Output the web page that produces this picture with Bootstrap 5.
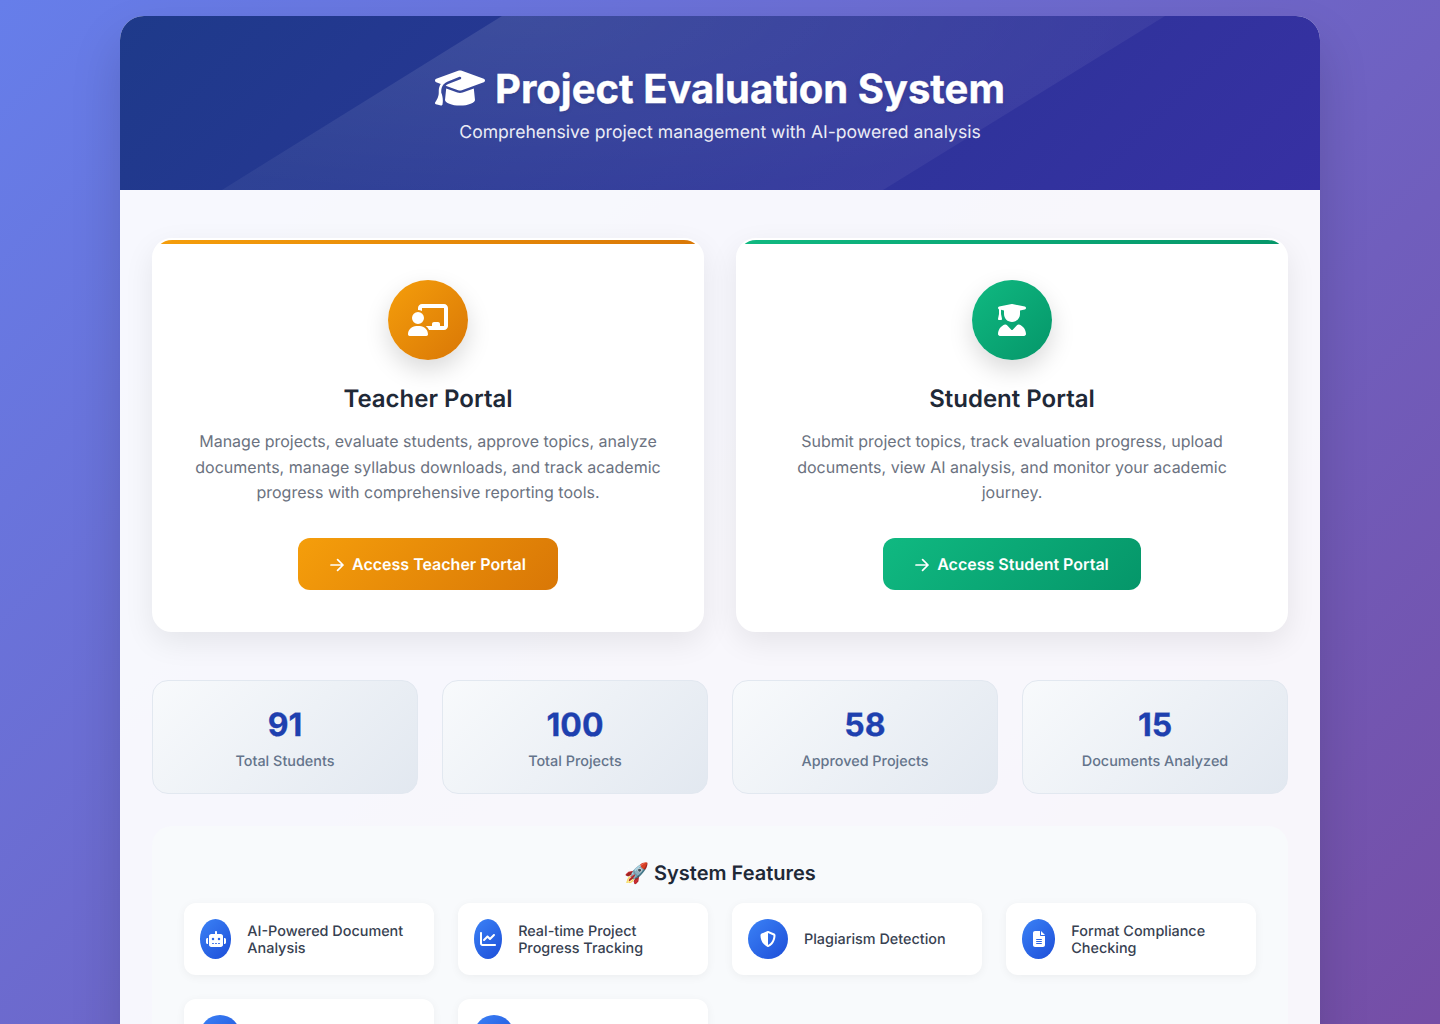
<!DOCTYPE html>
<html lang="en">
<head>
  <meta charset="UTF-8" />
  <title>Project Evaluation System</title>
  <meta name="viewport" content="width=device-width, initial-scale=1" />
  <link href="https://cdn.jsdelivr.net/npm/bootstrap@5.3.0/dist/css/bootstrap.min.css" rel="stylesheet" />
  <style>
    body {
      background: linear-gradient(135deg, #667eea 0%, #764ba2 100%);
      font-family: Inter, "Liberation Sans", sans-serif;
      text-rendering: geometricPrecision;
      padding: 16px 0;
      min-height: 100vh;
    }
    .app-shell {
      width: 1200px;
      background: rgba(255, 255, 255, .95);
      border-radius: 24px;
      box-shadow: 0 25px 50px rgba(0, 0, 0, .15);
      overflow: hidden;
    }
    .app-header {
      position: relative;
      height: 174px;
      padding-top: 49px;
      background: linear-gradient(135deg, #1e3a8a 0%, #3730a3 100%);
      color: #fff;
    }
    .app-header::before {
      content: "";
      position: absolute;
      inset: 0;
      background: radial-gradient(ellipse 650px 180px at 400px 0, rgba(255, 255, 255, .11), rgba(255, 255, 255, .05));
      clip-path: polygon(382px 0, 1045px 0, 763px 100%, 102px 100%);
    }
    .app-title {
      position: relative;
      font-size: 40px;
      font-weight: 700;
      line-height: 48px;
      margin-bottom: 6px;
      text-shadow: 0 2px 4px rgba(0, 0, 0, .1);
      -webkit-text-stroke: .4px #fff;
    }
    .app-title svg { width: 50px; height: 40px; margin-right: 10px; vertical-align: -5px; }
    .app-sub {
      position: relative;
      font-size: 17.6px;
      line-height: 28px;
      margin: 0;
      opacity: .9;
    }
    .app-body { padding: 48px 32px; }
    .portal-row { --bs-gutter-x: 32px; margin-bottom: 48px; }
    .portal-card {
      position: relative;
      height: 394px;
      padding: 40px 32px;
      border: 2px solid #fff;
      border-radius: 20px;
      overflow: hidden;
      box-shadow: 0 10px 30px rgba(0, 0, 0, .08);
    }
    .portal-card::before {
      content: "";
      position: absolute;
      top: 0;
      left: 0;
      right: 0;
      height: 4px;
    }
    .portal-teacher .portal-icon, .portal-teacher .portal-btn {
      background: linear-gradient(135deg, #f59e0b, #d97706);
    }
    .portal-student .portal-icon, .portal-student .portal-btn {
      background: linear-gradient(135deg, #10b981, #059669);
    }
    .portal-teacher::before { background: linear-gradient(90deg, #f59e0b, #d97706); }
    .portal-student::before { background: linear-gradient(90deg, #10b981, #059669); }
    .portal-icon {
      width: 80px;
      height: 80px;
      margin-bottom: 24px;
      box-shadow: 0 10px 25px rgba(0, 0, 0, .15);
    }
    .portal-name {
      font-size: 24px;
      font-weight: 600;
      line-height: 29px;
      color: #1f2937;
      margin-bottom: 16px;
    }
    .portal-text {
      font-size: 16px;
      line-height: 25.6px;
      color: #6b7280;
      margin-bottom: 32px;
    }
    .portal-btn {
      height: 52px;
      padding: 0 32px;
      border: 0;
      border-radius: 12px;
      font-size: 16px;
      font-weight: 600;
      color: #fff;
      line-height: 52px;
    }
    .portal-btn:hover { color: #fff; }
    .portal-btn svg { width: 14px; height: 14px; margin-right: 8px; vertical-align: -2px; }
    .stat-row { --bs-gutter-x: 24px; margin-bottom: 32px; }
    .stat-box {
      height: 114px;
      padding-top: 24px;
      border: 1px solid #e2e8f0;
      border-radius: 16px;
      background: linear-gradient(135deg, #f8fafc, #e2e8f0);
    }
    .stat-num {
      font-size: 32px;
      font-weight: 700;
      line-height: 40px;
      color: #1e40af;
      margin-bottom: 7px;
      -webkit-text-stroke: .3px #1e40af;
    }
    .stat-label {
      font-size: 14.4px;
      font-weight: 500;
      line-height: 20px;
      color: #64748b;
    }
    .feature-panel {
      padding: 32px;
      border-radius: 20px;
      background: #f8fafc;
    }
    .feature-title {
      font-size: 20px;
      font-weight: 600;
      line-height: 30px;
      color: #1f2937;
      margin-bottom: 15px;
    }
    .feature-grid {
      grid-template-columns: repeat(4, 250px);
      gap: 24px;
    }
    .feature-item {
      height: 72px;
      padding: 16px;
      gap: 16px;
      background: #fff;
      border-radius: 12px;
      box-shadow: 0 2px 10px rgba(0, 0, 0, .05);
      font-size: 14.4px;
      font-weight: 500;
      line-height: 17.3px;
      color: #374151;
    }
    .feature-item span { padding-top: 2px; }
    .feature-icon {
      width: 40px;
      height: 40px;
      background: linear-gradient(135deg, #3b82f6, #1d4ed8);
    }
    .feature-icon svg { height: 16px; }
  </style>
</head>
<body>

<div class="app-shell mx-auto">
  <!-- HEADER -->
  <header class="app-header text-center">
    <h1 class="app-title">
      <svg viewBox="0 0 640 512" fill="currentColor"><path d="M320 32c-8.1 0-16.1 1.4-23.7 4.1L15.8 137.4C6.3 140.9 0 149.9 0 160s6.3 19.1 15.8 22.6l57.9 20.9C57.3 229.3 48 259.8 48 291.9v28.1c0 28.4-10.8 57.7-22.3 80.8c-6.5 13-13.9 25.8-22.5 37.6C0 442.7-.9 448.3 .9 453.4s6 8.9 11.2 10.2l64 16c4.2 1.1 8.7 .3 12.4-2s6.3-6.1 7.1-10.4c8.6-42.8 4.3-81.2-2.1-108.7C90.3 344.3 86 329.8 80 316.5V291.9c0-30.2 10.2-58.7 27.9-81.5c12.9-15.5 29.6-28 49.2-35.7l157-61.7c8.2-3.2 17.5 .8 20.7 9s-.8 17.5-9 20.7l-157 61.7c-12.4 4.9-23.3 12.4-32.2 21.6l159.6 57.6c7.6 2.7 15.6 4.1 23.7 4.1s16.1-1.4 23.7-4.1L624.2 182.6c9.5-3.4 15.8-12.5 15.8-22.6s-6.3-19.1-15.8-22.6L343.7 36.1C336.1 33.4 328.1 32 320 32zM128 408c0 35.3 86 72 192 72s192-36.7 192-72L496.7 262.6 354.5 314c-11.1 4-22.8 6-34.5 6s-23.5-2-34.5-6L143.3 262.6 128 408z"/></svg>Project Evaluation System
    </h1>
    <p class="app-sub">Comprehensive project management with AI-powered analysis</p>
  </header>

  <main class="app-body">
    <!-- PORTALS -->
    <div class="row portal-row">
      <div class="col-6">
        <div class="card portal-card portal-teacher text-center align-items-center">
          <div class="portal-icon rounded-circle d-flex align-items-center justify-content-center text-white">
            <svg width="40" height="32" viewBox="0 0 640 512" fill="currentColor"><path d="M160 64c0-35.3 28.7-64 64-64H576c35.3 0 64 28.7 64 64V352c0 35.3-28.7 64-64 64H336.8c-11.8-25.5-29.9-47.5-52.4-64H384V320c0-17.7 14.3-32 32-32h64c17.7 0 32 14.3 32 32v32h64V64L224 64v49.1C205.2 102.2 183.3 96 160 96V64zm0 64a96 96 0 1 1 0 192 96 96 0 1 1 0-192zM133.3 352h53.3C260.3 352 320 411.7 320 485.3c0 14.7-11.9 26.7-26.7 26.7H26.7C11.9 512 0 500.1 0 485.3C0 411.7 59.7 352 133.3 352z"/></svg>
          </div>
          <h2 class="portal-name">Teacher Portal</h2>
          <p class="portal-text">Manage projects, evaluate students, approve topics, analyze documents, manage syllabus downloads, and track academic progress with comprehensive reporting tools.</p>
          <a href="#" class="btn portal-btn"><svg viewBox="0 0 14 14" fill="none" stroke="currentColor" stroke-width="1.7" stroke-linecap="round" stroke-linejoin="round"><path d="M1 7h12M7.6 1.6L13 7l-5.4 5.4"/></svg>Access Teacher Portal</a>
        </div>
      </div>
      <div class="col-6">
        <div class="card portal-card portal-student text-center align-items-center">
          <div class="portal-icon rounded-circle d-flex align-items-center justify-content-center text-white">
            <svg width="28" height="32" viewBox="0 0 448 512" fill="currentColor"><path d="M219.3 .5c3.1-.6 6.3-.6 9.4 0l200 40C439.9 42.7 448 52.6 448 64s-8.1 21.3-19.3 23.5L352 102.9V160c0 70.7-57.3 128-128 128s-128-57.3-128-128V102.9L48 93.3v65.1l15.7 78.4c.9 4.7-.3 9.6-3.3 13.3s-7.6 5.9-12.4 5.9H16c-4.8 0-9.3-2.1-12.4-5.9s-4.3-8.6-3.3-13.3L16 158.4V86.6C6.5 83.3 0 74.3 0 64C0 52.6 8.1 42.7 19.3 40.5l200-40zM111.9 327.7c10.5-3.4 21.8 .4 29.4 8.5l71 75.5c6.3 6.7 17 6.7 23.3 0l71-75.5c7.6-8.1 18.9-11.9 29.4-8.5C401 348.6 448 409.4 448 481.3c0 17-13.8 30.7-30.7 30.7H30.7C13.8 512 0 498.2 0 481.3c0-71.9 47-132.7 111.9-153.6z"/></svg>
          </div>
          <h2 class="portal-name">Student Portal</h2>
          <p class="portal-text">Submit project topics, track evaluation progress, upload documents, view AI analysis, and monitor your academic journey.</p>
          <a href="#" class="btn portal-btn"><svg viewBox="0 0 14 14" fill="none" stroke="currentColor" stroke-width="1.7" stroke-linecap="round" stroke-linejoin="round"><path d="M1 7h12M7.6 1.6L13 7l-5.4 5.4"/></svg>Access Student Portal</a>
        </div>
      </div>
    </div>

    <!-- STATS -->
    <div class="row stat-row text-center">
      <div class="col-3"><div class="stat-box"><div class="stat-num">91</div><div class="stat-label">Total Students</div></div></div>
      <div class="col-3"><div class="stat-box"><div class="stat-num">100</div><div class="stat-label">Total Projects</div></div></div>
      <div class="col-3"><div class="stat-box"><div class="stat-num">58</div><div class="stat-label">Approved Projects</div></div></div>
      <div class="col-3"><div class="stat-box"><div class="stat-num">15</div><div class="stat-label">Documents Analyzed</div></div></div>
    </div>

    <!-- FEATURES -->
    <section class="feature-panel">
      <h3 class="feature-title text-center">🚀 System Features</h3>
      <div class="feature-grid d-grid">
        <div class="feature-item d-flex align-items-center">
          <div class="feature-icon rounded-circle d-flex align-items-center justify-content-center text-white">
            <svg width="20" viewBox="0 0 640 512" fill="currentColor"><path d="M320 0c17.7 0 32 14.3 32 32V96H472c39.8 0 72 32.2 72 72V440c0 39.8-32.2 72-72 72H168c-39.8 0-72-32.2-72-72V168c0-39.8 32.2-72 72-72H288V32c0-17.7 14.3-32 32-32zM208 384c-8.8 0-16 7.2-16 16s7.2 16 16 16h32c8.8 0 16-7.2 16-16s-7.2-16-16-16H208zm96 0c-8.8 0-16 7.2-16 16s7.2 16 16 16h32c8.8 0 16-7.2 16-16s-7.2-16-16-16H304zm96 0c-8.8 0-16 7.2-16 16s7.2 16 16 16h32c8.8 0 16-7.2 16-16s-7.2-16-16-16H400zM264 256a40 40 0 1 0 -80 0 40 40 0 1 0 80 0zm152 40a40 40 0 1 0 0-80 40 40 0 1 0 0 80zM48 224H64V416H48c-26.5 0-48-21.5-48-48V272c0-26.5 21.5-48 48-48zm544 0c26.5 0 48 21.5 48 48v96c0 26.5-21.5 48-48 48H576V224h16z"/></svg>
          </div>
          <span>AI-Powered Document Analysis</span>
        </div>
        <div class="feature-item d-flex align-items-center">
          <div class="feature-icon rounded-circle d-flex align-items-center justify-content-center text-white">
            <svg width="16" viewBox="0 0 512 512" fill="currentColor"><path d="M64 64c0-17.7-14.3-32-32-32S0 46.3 0 64V400c0 44.2 35.8 80 80 80H480c17.7 0 32-14.3 32-32s-14.3-32-32-32H80c-8.8 0-16-7.2-16-16V64zm406.6 86.6c12.5-12.5 12.5-32.8 0-45.3s-32.8-12.5-45.3 0L320 210.7l-57.4-57.4c-12.5-12.5-32.8-12.5-45.3 0l-112 112c-12.5 12.5-12.5 32.8 0 45.3s32.8 12.5 45.3 0L240 221.3l57.4 57.4c12.5 12.5 32.8 12.5 45.3 0l128-128z"/></svg>
          </div>
          <span>Real-time Project Progress Tracking</span>
        </div>
        <div class="feature-item d-flex align-items-center">
          <div class="feature-icon rounded-circle d-flex align-items-center justify-content-center text-white">
            <svg width="16" viewBox="0 0 512 512" fill="currentColor"><path d="M256 0c4.6 0 9.2 1 13.4 2.9L457.7 82.8c22 9.3 38.4 31 38.3 57.2c-.5 99.2-41.3 280.7-213.6 363.2c-16.7 8-36.1 8-52.8 0C57.3 420.7 16.5 239.2 16 140c-.1-26.2 16.3-47.9 38.3-57.2L242.7 2.9C246.8 1 251.4 0 256 0zm0 66.8V444.8C394 378 431.1 230.1 432 141.4L256 66.8l0 0z"/></svg>
          </div>
          <span>Plagiarism Detection</span>
        </div>
        <div class="feature-item d-flex align-items-center">
          <div class="feature-icon rounded-circle d-flex align-items-center justify-content-center text-white">
            <svg width="12" viewBox="0 0 384 512" fill="currentColor"><path d="M64 0C28.7 0 0 28.7 0 64V448c0 35.3 28.7 64 64 64H320c35.3 0 64-28.7 64-64V160H256c-17.7 0-32-14.3-32-32V0H64zM256 0V128H384L256 0zM112 256H272c8.8 0 16 7.2 16 16s-7.2 16-16 16H112c-8.8 0-16-7.2-16-16s7.2-16 16-16zm0 64H272c8.8 0 16 7.2 16 16s-7.2 16-16 16H112c-8.8 0-16-7.2-16-16s7.2-16 16-16zm0 64H272c8.8 0 16 7.2 16 16s-7.2 16-16 16H112c-8.8 0-16-7.2-16-16s7.2-16 16-16z"/></svg>
          </div>
          <span>Format Compliance Checking</span>
        </div>
        <div class="feature-item d-flex align-items-center">
          <div class="feature-icon rounded-circle flex-shrink-0"></div>
        </div>
        <div class="feature-item d-flex align-items-center">
          <div class="feature-icon rounded-circle flex-shrink-0"></div>
        </div>
      </div>
    </section>
  </main>
</div>

<script src="https://cdn.jsdelivr.net/npm/bootstrap@5.3.0/dist/js/bootstrap.bundle.min.js"></script>
</body>
</html>
